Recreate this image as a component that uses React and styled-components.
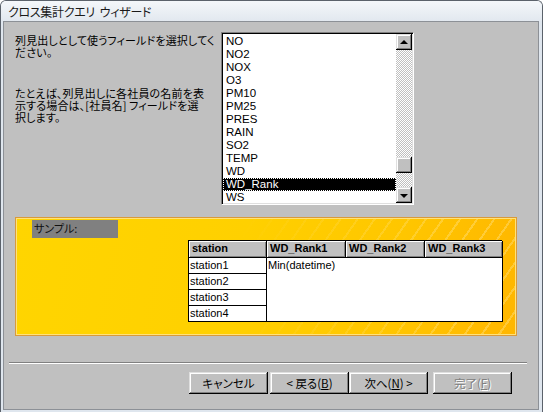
import React from "react";
import styled, { createGlobalStyle } from "styled-components";

const Global = createGlobalStyle`
  html, body { margin: 0; padding: 0; background: #ffffff; }
  body { font-family: "Noto Sans CJK JP", "Liberation Sans", sans-serif; }
  #root { width: 543px; height: 412px; }
`;

const jp = `"Noto Sans CJK JP", "Liberation Sans", sans-serif`;
const latin = `"Liberation Sans", "Noto Sans CJK JP", sans-serif`;

const Window = styled.div`
  box-sizing: border-box;
  width: 543px;
  height: 412px;
  border: 1px solid #5b626b;
  border-bottom: none;
  border-radius: 6px 6px 0 0;
  background: #dfe6ee;
  display: flex;
  flex-direction: column;
  overflow: hidden;
`;

const TitleBar = styled.div`
  height: 20px;
  flex: none;
  display: flex;
  align-items: center;
  padding-left: 7px;
  font-family: ${jp};
  font-size: 12px;
  font-feature-settings: "palt";
  letter-spacing: -0.3px;
  color: #1a1a1a;
  background: linear-gradient(#f4f7fa, #e2e8ef);
  white-space: pre;
`;

const Client = styled.div`
  flex: 1;
  margin: 0 3px 2px 2px;
  border: 1px solid #8c9096;
  background: #c0c0c0;
  display: flex;
  flex-direction: column;
  padding: 10px 0 0 11px;
`;

const TopRow = styled.div`
  display: flex;
  height: 173px;
`;

const TextCol = styled.div`
  width: 206px;
  padding-top: 2px;
  font-family: ${jp};
  font-size: 11px;
  font-feature-settings: "palt";
  letter-spacing: 0.15px;
  line-height: 12px;
  color: #000;
`;

const Para = styled.div`
  white-space: nowrap;
  height: 12px;
  margin-top: ${(p) => p.$gap || 0}px;
`;

const ListBox = styled.div`
  box-sizing: border-box;
  width: 193px;
  height: 173px;
  background: #fff;
  border-top: 1px solid #808080;
  border-left: 1px solid #808080;
  border-right: 1px solid #fff;
  border-bottom: 1px solid #fff;
  box-shadow: inset 1px 1px #000, inset -1px -1px #dfdfdf;
  padding: 1px;
  display: flex;
`;

const Items = styled.div`
  flex: 1;
  padding-top: 1px;
  font-family: ${latin};
  font-size: 11.5px;
`;

const Item = styled.div`
  height: 13px;
  line-height: 13px;
  padding-left: 3px;
  background: ${(p) => (p.$sel ? "#000" : "transparent")};
  color: ${(p) => (p.$sel ? "#fff" : "#000")};
  outline: ${(p) => (p.$sel ? "1px dotted #ffffff" : "none")};
  outline-offset: -1px;
`;

const ScrollBar = styled.div`
  width: 16px;
  display: flex;
  flex-direction: column;
`;

const Track = styled.div`
  flex: 1;
  background-color: #fff;
  background-image: repeating-conic-gradient(#c0c0c0 0 25%, #ffffff 0 50%);
  background-size: 2px 2px;
  padding-top: ${(p) => p.$offset}px;
`;

const Raised = styled.div`
  box-sizing: border-box;
  background: #c0c0c0;
  box-shadow: inset -1px -1px #000, inset 1px 1px #dfdfdf, inset -2px -2px #808080, inset 2px 2px #fff;
`;

const ArrowBtn = styled(Raised)`
  width: 16px;
  height: 16px;
  display: flex;
  align-items: center;
  justify-content: center;
  &::after {
    content: "";
    width: 0;
    height: 0;
    border-left: 4px solid transparent;
    border-right: 4px solid transparent;
    ${(p) => (p.$dir === "up" ? "border-bottom: 4px solid #000;" : "border-top: 4px solid #000;")}
    margin-top: ${(p) => (p.$dir === "up" ? "-1px" : "1px")};
  }
`;

const Thumb = styled(Raised)`
  width: 16px;
  height: 16px;
`;

const Sample = styled.div`
  position: relative;
  box-sizing: border-box;
  margin-top: 12px;
  width: 502px;
  height: 119px;
  border: 1px solid #d99a3a;
  box-shadow: inset 0 0 0 1px #ffe27a;
  background: linear-gradient(100deg, #ffd500 0%, #ffd000 45%, #ffc600 75%, #ffb600 100%);
  display: flex;
  flex-direction: column;
  &::before {
    content: "";
    position: absolute;
    inset: 1px;
    pointer-events: none;
    background: repeating-linear-gradient(125deg, rgba(255,255,255,0) 0 12px, rgba(255,235,160,0.35) 12px 14px);
    -webkit-mask-image: linear-gradient(to right, transparent 45%, #000 90%);
    mask-image: linear-gradient(to right, transparent 45%, #000 90%);
  }
  & > * { position: relative; }
`;

const SampleLabel = styled.div`
  margin: 2px 0 0 16px;
  width: 86px;
  height: 18px;
  background: #808080;
  font-family: ${jp};
  font-size: 11px;
  font-feature-settings: "palt";
  line-height: 16px;
  padding-left: 2px;
  box-sizing: border-box;
  color: #101010;
`;

const Grid = styled.div`
  margin: 2px 0 0 172px;
  width: 314px;
  display: grid;
  grid-template-columns: 78px 79px 79px 78px;
  grid-template-rows: 17px 16px 16px 16px 16px;
  box-sizing: border-box;
  border-top: 1px solid #000;
  border-left: 1px solid #000;
  font-family: ${latin};
  font-size: 11px;
`;

const HeadCell = styled.div`
  background: #c0c0c0;
  border-right: 1px solid #000;
  border-bottom: 1px solid #000;
  box-shadow: inset 1px 1px #fff, inset -1px -1px #808080;
  font-weight: bold;
  line-height: 15px;
  padding-left: 3px;
  white-space: nowrap;
  overflow: hidden;
`;

const Cell = styled.div`
  background: #fff;
  border-right: 1px solid #000;
  border-bottom: 1px solid #000;
  line-height: 15px;
  padding-left: 1px;
  white-space: nowrap;
  grid-column: 1;
  grid-row: ${(p) => p.$row};
`;

const BodyCell = styled(Cell)`
  grid-column: 2 / 5;
  grid-row: 2 / 6;
  line-height: 14px;
`;

const Separator = styled.div`
  margin: 26px 0 0 -6px;
  width: 518px;
  border-top: 1px solid #808080;
  border-bottom: 1px solid #fff;
`;

const ButtonRow = styled.div`
  display: flex;
  margin: 8px 0 0 174px;
`;

const Button = styled(Raised)`
  width: 79px;
  height: 22px;
  margin-left: ${(p) => p.$gap || 0}px;
  display: flex;
  align-items: center;
  justify-content: center;
  font-family: ${jp};
  font-size: 11.5px;
  font-feature-settings: "palt";
  color: ${(p) => (p.$disabled ? "#808080" : "#000")};
  text-shadow: ${(p) => (p.$disabled ? "1px 1px #ffffff" : "none")};
  white-space: pre;
  u { text-decoration: underline; }
`;

const fields = ["NO", "NO2", "NOX", "O3", "PM10", "PM25", "PRES", "RAIN", "SO2", "TEMP", "WD", "WD_Rank", "WS"];

export default function App() {
  return (
    <>
      <Global />
      <Window>
        <TitleBar>{"クロス集計クエリ  ウィザード"}</TitleBar>
        <Client>
          <TopRow>
            <TextCol>
              <Para>列見出しとして使うフィールドを選択してく</Para>
              <Para>ださい。</Para>
              <Para $gap={29}>たとえば、列見出しに各社員の名前を表</Para>
              <Para>示する場合は、[社員名] フィールドを選</Para>
              <Para>択します。</Para>
            </TextCol>
            <ListBox>
              <Items>
                {fields.map((f) => (
                  <Item key={f} $sel={f === "WD_Rank"}>{f}</Item>
                ))}
              </Items>
              <ScrollBar>
                <ArrowBtn $dir="up" />
                <Track $offset={107}>
                  <Thumb />
                </Track>
                <ArrowBtn $dir="down" />
              </ScrollBar>
            </ListBox>
          </TopRow>
          <Sample>
            <SampleLabel>サンプル:</SampleLabel>
            <Grid>
              <HeadCell>station</HeadCell>
              <HeadCell>WD_Rank1</HeadCell>
              <HeadCell>WD_Rank2</HeadCell>
              <HeadCell>WD_Rank3</HeadCell>
              <Cell $row={2}>station1</Cell>
              <BodyCell>Min(datetime)</BodyCell>
              <Cell $row={3}>station2</Cell>
              <Cell $row={4}>station3</Cell>
              <Cell $row={5}>station4</Cell>
            </Grid>
          </Sample>
          <Separator />
          <ButtonRow>
            <Button>キャンセル</Button>
            <Button $gap={2}>{"< 戻る("}<u>B</u>{")"}</Button>
            <Button>{"次へ("}<u>N</u>{") >"}</Button>
            <Button $gap={5} $disabled>{"完了("}<u>F</u>{")"}</Button>
          </ButtonRow>
        </Client>
      </Window>
    </>
  );
}
